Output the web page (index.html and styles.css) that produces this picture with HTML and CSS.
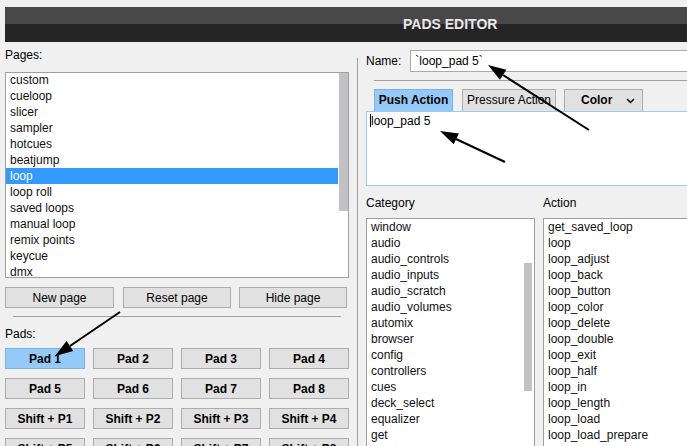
FILE: index.html
```html
<!DOCTYPE html>
<html lang="en">
<head>
    <meta charset="UTF-8">
    <title>Pads Editor</title>
    <link rel="stylesheet" href="styles.css">
</head>
<body>
    <div class="titlebar">PADS EDITOR</div>
    <div class="main">
        <div class="left-panel">
            <div class="label">Pages:</div>
            <div class="list pages-list">
                <div class="list-items">
                    <div class="item">custom</div>
                    <div class="item">cueloop</div>
                    <div class="item">slicer</div>
                    <div class="item">sampler</div>
                    <div class="item">hotcues</div>
                    <div class="item">beatjump</div>
                    <div class="item selected">loop</div>
                    <div class="item">loop roll</div>
                    <div class="item">saved loops</div>
                    <div class="item">manual loop</div>
                    <div class="item">remix points</div>
                    <div class="item">keycue</div>
                    <div class="item">dmx</div>
                </div>
                <div class="scrollbar"><div class="thumb pages-thumb"></div></div>
            </div>
            <div class="page-buttons">
                <button class="btn">New page</button>
                <button class="btn">Reset page</button>
                <button class="btn">Hide page</button>
            </div>
            <div class="separator left-sep"></div>
            <div class="label pads-label">Pads:</div>
            <div class="pads-grid">
                <button class="btn pad active">Pad 1</button>
                <button class="btn pad">Pad 2</button>
                <button class="btn pad">Pad 3</button>
                <button class="btn pad">Pad 4</button>
                <button class="btn pad">Pad 5</button>
                <button class="btn pad">Pad 6</button>
                <button class="btn pad">Pad 7</button>
                <button class="btn pad">Pad 8</button>
                <button class="btn pad">Shift + P1</button>
                <button class="btn pad">Shift + P2</button>
                <button class="btn pad">Shift + P3</button>
                <button class="btn pad">Shift + P4</button>
                <button class="btn pad">Shift + P5</button>
                <button class="btn pad">Shift + P6</button>
                <button class="btn pad">Shift + P7</button>
                <button class="btn pad">Shift + P8</button>
            </div>
        </div>
        <div class="divider"></div>
        <div class="right-panel">
            <div class="name-row">
                <span class="name-label">Name:</span>
                <div class="name-input">`loop_pad 5`</div>
            </div>
            <div class="separator right-sep"></div>
            <div class="tabs">
                <div class="tab active push-tab">Push Action</div>
                <div class="tab pressure-tab">Pressure Action</div>
                <div class="tab color-tab">Color
                    <svg class="chevron" width="9" height="6" viewBox="0 0 9 6">
                        <path d="M1 1 L4.5 4.5 L8 1" fill="none" stroke="#000" stroke-width="1.5"/>
                    </svg>
                </div>
            </div>
            <div class="action-text"><span class="caret"></span>loop_pad 5</div>
            <div class="columns">
                <div class="column category-col">
                    <div class="label col-label">Category</div>
                    <div class="list category-list">
                        <div class="list-items">
                            <div class="item">window</div>
                            <div class="item">audio</div>
                            <div class="item">audio_controls</div>
                            <div class="item">audio_inputs</div>
                            <div class="item">audio_scratch</div>
                            <div class="item">audio_volumes</div>
                            <div class="item">automix</div>
                            <div class="item">browser</div>
                            <div class="item">config</div>
                            <div class="item">controllers</div>
                            <div class="item">cues</div>
                            <div class="item">deck_select</div>
                            <div class="item">equalizer</div>
                            <div class="item">get</div>
                        </div>
                        <div class="scrollbar"><div class="thumb category-thumb"></div></div>
                    </div>
                </div>
                <div class="column action-col">
                    <div class="label col-label">Action</div>
                    <div class="list action-list">
                        <div class="list-items">
                            <div class="item">get_saved_loop</div>
                            <div class="item">loop</div>
                            <div class="item">loop_adjust</div>
                            <div class="item">loop_back</div>
                            <div class="item">loop_button</div>
                            <div class="item">loop_color</div>
                            <div class="item">loop_delete</div>
                            <div class="item">loop_double</div>
                            <div class="item">loop_exit</div>
                            <div class="item">loop_half</div>
                            <div class="item">loop_in</div>
                            <div class="item">loop_length</div>
                            <div class="item">loop_load</div>
                            <div class="item">loop_load_prepare</div>
                        </div>
                    </div>
                </div>
            </div>
        </div>
    </div>
    <!-- annotation arrows drawn over the screenshot -->
    <svg class="arrows" width="687" height="446" viewBox="0 0 687 446">
        <line x1="589" y1="130" x2="503" y2="75" stroke="#000" stroke-width="2"/>
        <polygon points="488,65 506.4,69.7 499.9,79.8" fill="#000"/>
        <line x1="505" y1="162" x2="456" y2="139" stroke="#000" stroke-width="2"/>
        <polygon points="440,131 458.9,133.4 453.7,144.2" fill="#000"/>
        <line x1="120" y1="312" x2="70" y2="346" stroke="#000" stroke-width="2"/>
        <polygon points="55,356 66.5,340.9 73.3,350.9" fill="#000"/>
    </svg>
</body>
</html>
```

FILE: styles.css
```css
html, body {
    margin: 0;
    padding: 0;
    height: 446px;
    overflow: hidden;
}
body {
    background-color: #f0f0f0;
    font-family: "Liberation Sans", Arial, sans-serif;
    font-size: 12px;
    color: #000;
    position: relative;
}
.titlebar {
    margin: 7px 0 0 5px;
    height: 35px;
    line-height: 35px;
    padding-left: 398px;
    background: linear-gradient(#484848 0, #484848 17px, #252525 17px, #252525 100%);
    color: #e8e8e8;
    font-weight: bold;
    font-size: 14px;
}
.main {
    display: flex;
    padding-left: 5px;
}
.label {
    line-height: 14px;
}
.left-panel {
    width: 344px;
    flex-shrink: 0;
    padding-top: 6px;
}
.list {
    display: flex;
    background-color: white;
    border: 1px solid #a0a0a0;
    box-sizing: border-box;
    overflow: hidden;
}
.list-items {
    flex: 1;
}
.item {
    line-height: 16px;
    height: 16px;
    padding-left: 4px;
    white-space: nowrap;
    color: #111;
}
.item.selected {
    background-color: #3399ff;
    color: white;
}
.scrollbar {
    width: 10px;
    flex-shrink: 0;
    position: relative;
}
.thumb {
    position: absolute;
    left: 1px;
    width: 9px;
    background-color: #c2c2c4;
}
.pages-list {
    margin-top: 10px;
    height: 206px;
}
.pages-list .list-items {
    margin-top: -1px;
}
.pages-thumb {
    top: 0;
    height: 138px;
}
.btn {
    font-family: "Liberation Sans", Arial, sans-serif;
    font-size: 12px;
    color: #000;
    background-color: #e1e1e1;
    border: 1px solid #adadad;
    height: 21px;
    padding: 0;
    margin: 0;
    box-sizing: border-box;
}
.page-buttons {
    display: grid;
    grid-template-columns: 109px 109px 108px;
    column-gap: 8px;
    margin-top: 9px;
}
.page-buttons .btn:nth-child(2) {
    margin-left: 1px;
}
.separator {
    height: 1px;
    background-color: #a0a0a0;
}
.left-sep {
    margin: 8px 8px 0 8px;
}
.pads-label {
    margin-top: 10px;
}
.pads-grid {
    display: grid;
    grid-template-columns: repeat(4, 80px);
    grid-auto-rows: 21px;
    gap: 9px 8px;
    margin-top: 7px;
}
.pad {
    font-weight: bold;
}
.pad.active {
    background-color: #95c9f7;
    border-color: #7cb2e4;
}
.divider {
    width: 1px;
    height: 400px;
    background-color: #a0a0a0;
    margin: 16px 0 0 8px;
    flex-shrink: 0;
}
.right-panel {
    margin-left: 8px;
    padding-top: 8px;
    flex-shrink: 0;
    width: 340px;
}
.name-row {
    display: flex;
    align-items: center;
}
.name-label {
    width: 45px;
}
.name-input {
    width: 300px;
    height: 22px;
    line-height: 20px;
    box-sizing: border-box;
    border: 1px solid #a9a9a9;
    background-color: white;
    padding-left: 4px;
}
.right-sep {
    margin: 8px 0 0 8px;
}
.tabs {
    display: flex;
    margin: 8px 0 0 8px;
    height: 22px;
}
.tab {
    height: 22px;
    line-height: 21px;
    box-sizing: border-box;
    border: 1px solid #adadad;
    border-bottom: none;
    background-color: #e1e1e1;
    text-align: center;
}
.tab.active {
    background-color: #95c9f7;
    border-color: #7cb2e4;
}
.push-tab {
    width: 79px;
    font-weight: bold;
}
.pressure-tab {
    width: 94px;
    margin-left: 9px;
}
.color-tab {
    width: 79px;
    margin-left: 8px;
    font-weight: bold;
    display: flex;
    align-items: center;
    padding-left: 16px;
}
.chevron {
    margin-left: 14px;
}
.action-text {
    height: 75px;
    box-sizing: border-box;
    border: 1px solid #9ccbf1;
    background-color: white;
    padding: 2px 0 0 3px;
    line-height: 14px;
    width: 340px;
}
.caret {
    display: inline-block;
    width: 1px;
    height: 13px;
    background-color: #000;
    vertical-align: -2px;
}
.columns {
    display: flex;
    margin-top: 10px;
}
.col-label {
    margin-bottom: 8px;
}
.category-col {
    width: 169px;
}
.action-col {
    margin-left: 8px;
    width: 160px;
}
.category-list {
    height: 240px;
}
.category-thumb {
    top: 44px;
    height: 128px;
    left: 0;
    width: 8px;
}
.action-list {
    height: 240px;
}
.arrows {
    position: absolute;
    top: 0;
    left: 0;
    pointer-events: none;
}
```
